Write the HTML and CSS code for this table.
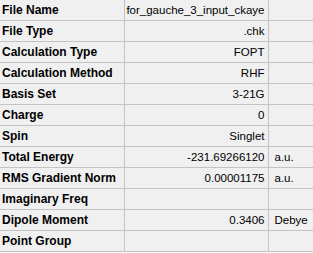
FILE: index.html
```html
<!DOCTYPE html>
<html lang="en">
<head>
  <meta charset="UTF-8">
  <title>Summary</title>
  <link rel="stylesheet" href="styles.css">
</head>
<body>
  <!-- Job summary grid -->
  <table class="summary">
    <colgroup>
      <col class="col-name">
      <col class="col-value">
      <col class="col-unit">
    </colgroup>
    <tr><th>File Name</th><td class="value">for_gauche_3_input_ckaye</td><td></td></tr>
    <tr><th>File Type</th><td class="value">.chk</td><td></td></tr>
    <tr><th>Calculation Type</th><td class="value">FOPT</td><td></td></tr>
    <tr><th>Calculation Method</th><td class="value">RHF</td><td></td></tr>
    <tr><th>Basis Set</th><td class="value">3-21G</td><td></td></tr>
    <tr><th>Charge</th><td class="value">0</td><td></td></tr>
    <tr><th>Spin</th><td class="value">Singlet</td><td></td></tr>
    <tr><th>Total Energy</th><td class="value">-231.69266120</td><td class="unit">a.u.</td></tr>
    <tr><th>RMS Gradient Norm</th><td class="value">0.00001175</td><td class="unit">a.u.</td></tr>
    <tr><th>Imaginary Freq</th><td class="value"></td><td></td></tr>
    <tr><th>Dipole Moment</th><td class="value">0.3406</td><td class="unit">Debye</td></tr>
    <tr><th>Point Group</th><td class="value"></td><td></td></tr>
  </table>
</body>
</html>
```

FILE: styles.css
```css
body {
  margin: 0;
  background: #ffffff;
  font-family: "Liberation Sans", Arial, sans-serif;
  font-size: 11.5px;
  color: #000;
}
.summary {
  border-collapse: collapse;
  table-layout: fixed;
  width: 313px;
  background: #f0f0f0;
}
.col-name {
  width: 124px;
}
.col-value {
  width: 144px;
}
.col-unit {
  width: 45px;
}
.summary th,
.summary td {
  height: 20px;
  padding: 0;
  border-bottom: 1px solid #c4c4c4;
  white-space: nowrap;
  overflow: hidden;
}
.summary th {
  text-align: left;
  font-size: 12px;
  font-weight: bold;
  padding-left: 2px;
  border-right: 1px solid #c4c4c4;
}
.summary td.value {
  text-align: right;
  padding-right: 3px;
  border-right: 1px solid #c4c4c4;
}
.summary td.unit {
  padding-left: 6px;
}
```
